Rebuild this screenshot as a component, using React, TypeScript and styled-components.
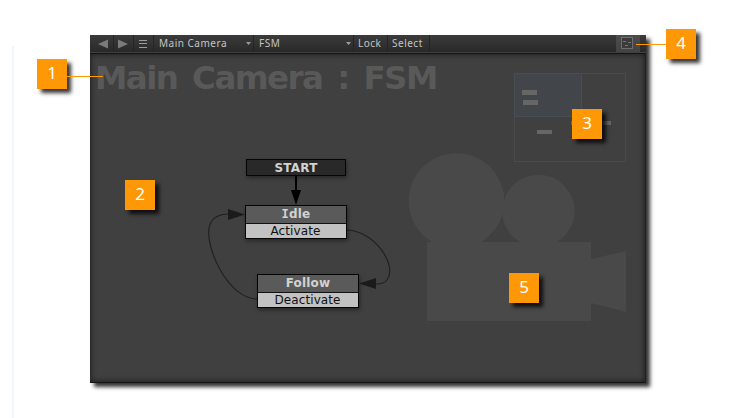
import React from "react";
import styled, { createGlobalStyle } from "styled-components";

const GlobalStyle = createGlobalStyle`
  * { box-sizing: border-box; }
  html, body { margin: 0; background: #fff; }
  body { font-family: "DejaVu Sans", Verdana, sans-serif; }
`;

const Page = styled.main`
  position: relative;
  width: 737px;
  height: 418px;
  padding: 35px 0 0 12px;
  display: flex;
  align-items: flex-start;
  overflow: hidden;
`;

const Rule = styled.div`
  flex: none;
  width: 2px;
  height: 372px;
  margin: 11px 76px 0 0;
  background: #f1f6fc;
`;

const Editor = styled.section`
  flex: none;
  width: 556px;
  height: 348px;
  display: flex;
  flex-direction: column;
  background: #404040;
  box-shadow: 4px 4px 4px rgba(0, 0, 0, 0.8);
`;

const Toolbar = styled.header`
  flex: none;
  height: 18px;
  display: flex;
  background: linear-gradient(#3b3b3b, #292929);
  border-bottom: 1px solid #404040;
`;

const ToolItem = styled.div<{ $width: number; $pad?: number }>`
  width: ${(p) => p.$width}px;
  padding: 0 ${(p) => p.$pad ?? 0}px;
  display: flex;
  align-items: center;
  justify-content: space-between;
  border-right: 1px solid #252525;
  color: #c4c4c4;
  font-family: "Noto Sans", sans-serif;
  font-size: 10px;
  line-height: 17px;
  letter-spacing: 0.5px;
  white-space: nowrap;
  svg { display: block; flex: none; }
`;

const IconItem = styled(ToolItem)`
  justify-content: flex-start;
`;

const Label = styled.span`
  padding-left: 3px;
`;

const MapToggle = styled.div`
  width: 24px;
  height: 17px;
  margin: 0 6px 0 auto;
  padding: 2px 0 0 5px;
  background: linear-gradient(#4c4c4c, #434343);
  svg { display: block; }
`;

const Canvas = styled.div`
  position: relative;
  flex: 1;
  border-top: 1px solid #151515;
  border-bottom: 1px solid #151515;
  border-right: 1px solid #202020;
  box-shadow: inset 0 0 6px rgba(0, 0, 0, 0.65);
`;

const Title = styled.h1`
  margin: 0;
  padding: 4px 0 0 5px;
  color: #595959;
  font-size: 32.5px;
  line-height: 41px;
  letter-spacing: -1.55px;
  word-spacing: 5px;
  white-space: nowrap;
`;

const Drawing = styled.svg`
  position: absolute;
  left: 0;
  top: 0;
  display: block;
`;

const Node = styled.div<{ $x: number; $y: number; $width: number }>`
  position: absolute;
  left: ${(p) => p.$x}px;
  top: ${(p) => p.$y}px;
  width: ${(p) => p.$width}px;
  border: 1px solid #050505;
  box-shadow: 1px 2px 4px rgba(0, 0, 0, 0.4);
  text-align: center;
  font-size: 12px;
`;

const NodeTitle = styled.div<{ $start?: boolean; $slab?: boolean }>`
  height: ${(p) => (p.$start ? 15 : 17)}px;
  line-height: 16px;
  background: ${(p) => (p.$start ? "#292929" : "#5a5a5a")};
  color: #d2d2d2;
  font-weight: bold;
  letter-spacing: 0.2px;
  &::first-letter {
    font-family: ${(p) => (p.$slab ? '"DejaVu Sans Mono", monospace' : "inherit")};
  }
`;

const NodeEvent = styled.div`
  height: 15px;
  padding-right: 1px;
  line-height: 14px;
  border-top: 1px solid #111;
  background: #c2c2c2;
  color: #111;
  letter-spacing: 0.1px;
`;

const Marker = styled.div<{ $x: number; $y: number }>`
  position: absolute;
  left: ${(p) => p.$x}px;
  top: ${(p) => p.$y}px;
  width: 30px;
  height: 30px;
  background: #ff9806;
  box-shadow: 4px 4px 4px rgba(0, 0, 0, 0.8);
  color: #fff;
  font: 17px/28px "Noto Sans", sans-serif;
  text-align: center;
`;

const Leader = styled.div<{ $x: number; $y: number; $width: number }>`
  position: absolute;
  left: ${(p) => p.$x}px;
  top: ${(p) => p.$y}px;
  width: ${(p) => p.$width}px;
  height: 1px;
  background: #ff9806;
`;

const Caret = () => (
  <svg width="5" height="3" viewBox="0 0 5 3"><path d="M0 0h5L2.500 3z" fill="#9b9b9b" /></svg>
);

const markers = [
  { label: "1", x: 37, y: 59 },
  { label: "2", x: 125, y: 180 },
  { label: "3", x: 572, y: 109 },
  { label: "4", x: 666, y: 29 },
  { label: "5", x: 509, y: 273 },
];

export default function App() {
  return (
    <Page>
      <GlobalStyle />
      <Rule />
      <Editor>
        <Toolbar>
          <IconItem $width={24} $pad={8}>
            <svg width="10" height="10"><path d="M10 .5v9L0 5z" fill="#7b7b7b" /></svg>
          </IconItem>
          <IconItem $width={20} $pad={4}>
            <svg width="10" height="10"><path d="M0 .5v9L10 5z" fill="#7b7b7b" /></svg>
          </IconItem>
          <IconItem $width={20} $pad={5}>
            <svg width="8" height="9"><path d="M0 1.500h8M0 4.500h8M0 8.500h8" stroke="#9c9c9c" /></svg>
          </IconItem>
          <ToolItem $width={100} $pad={2}><Label>Main Camera</Label><Caret /></ToolItem>
          <ToolItem $width={100} $pad={2}><Label>FSM</Label><Caret /></ToolItem>
          <ToolItem $width={34} $pad={4}>Lock</ToolItem>
          <ToolItem $width={42} $pad={4}>Select</ToolItem>
          <MapToggle>
            <svg width="12" height="12">
              <rect x=".5" y=".5" width="11" height="11" fill="#3b3b3b" stroke="#6e6e6e" />
              <path d="M2 4.500h3M7 5.500h3M4 8.500h3" stroke="#777" />
            </svg>
          </MapToggle>
        </Toolbar>
        <Canvas>
          <Drawing width="555" height="328" viewBox="90 54 555 328">
            <g fill="#494949">
              <circle cx="456.5" cy="201" r="47.8" />
              <circle cx="538.4" cy="211" r="36.2" />
              <path d="M427 242h164v17l35-8v61l-35-9v18H427z" />
            </g>
            <rect x="514.5" y="73.5" width="111" height="88" fill="none" stroke="#4a4a4a" />
            <rect x="514.5" y="73.5" width="67" height="43" fill="#42464a" stroke="#464e55" />
            <path d="M522 90h15v5h-15zM523 100h15v5h-15zM537 130h15v4h-15zM571 121h15v4h-15zM596 121h15v4h-15z" fill="#666" />
            <g fill="none" stroke="#202020" strokeWidth="1.15">
              <path d="M346 230C374 230 398 265 387 280Q384 284 376 284" />
              <path d="M257 299C228 299 204 246 209.500 226Q213 214 229 214" />
            </g>
            <path d="M245 214.500L228 209v11zM359 283.500L376 278v11z" fill="#1b1b1b" />
            <path d="M296 175v18" stroke="#000" strokeWidth="2" />
            <path d="M291 190h10l-5 15z" fill="#000" />
          </Drawing>
          <Title>Main Camera : FSM</Title>
          <Node $x={156} $y={105} $width={100}><NodeTitle $start>START</NodeTitle></Node>
          <Node $x={155} $y={151} $width={102}>
            <NodeTitle $slab>Idle</NodeTitle><NodeEvent>Activate</NodeEvent>
          </Node>
          <Node $x={167} $y={220} $width={102}>
            <NodeTitle>Follow</NodeTitle><NodeEvent>Deactivate</NodeEvent>
          </Node>
        </Canvas>
      </Editor>
      {markers.map((m) => <Marker key={m.label} $x={m.x} $y={m.y}>{m.label}</Marker>)}
      <Leader $x={67} $y={76} $width={36} />
      <Leader $x={636} $y={44} $width={30} />
    </Page>
  );
}
